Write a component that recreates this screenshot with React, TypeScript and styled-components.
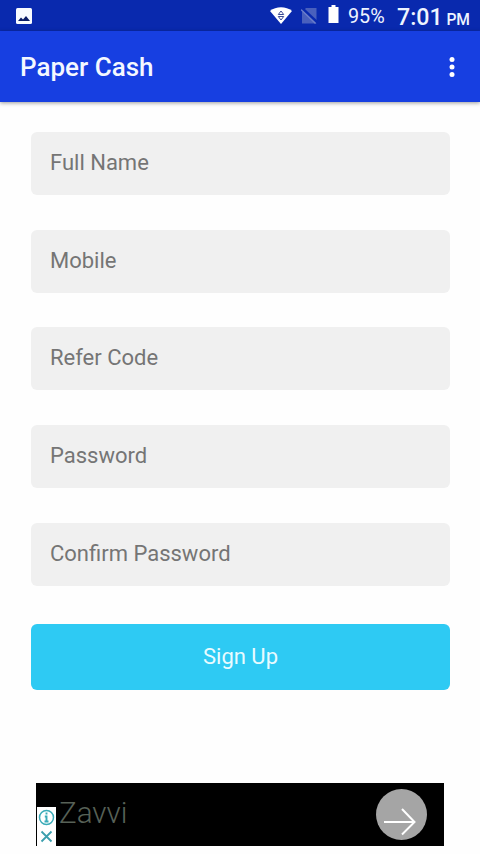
import React from "react";
import styled, { createGlobalStyle } from "styled-components";

const GlobalStyle = createGlobalStyle`
  * { box-sizing: border-box; }
  body { margin: 0; background: #fefefe; font-family: Roboto, sans-serif; }
`;

const Screen = styled.div`
  width: 480px;
  height: 854px;
  display: flex;
  flex-direction: column;
  overflow: hidden;
`;

const StatusBar = styled.header`
  height: 31px;
  flex: none;
  display: flex;
  align-items: flex-start;
  justify-content: space-between;
  padding: 0 10px 0 16px;
  background: #0929ae;
  color: #eef4ff;
`;

const PictureIcon = styled.svg`
  width: 16px;
  height: 16px;
  margin-top: 8px;
`;

const StatusGroup = styled.div`
  display: flex;
  align-items: flex-start;
`;

const StatusIcon = styled.svg<{ $w: number; $h: number; $top: number; $gap: number }>`
  flex: none;
  width: ${(p) => p.$w}px;
  height: ${(p) => p.$h}px;
  margin-top: ${(p) => p.$top}px;
  margin-right: ${(p) => p.$gap}px;
`;

const Battery = styled.span`
  width: 49px;
  margin-top: 5px;
  font-size: 19.8px;
  line-height: 23px;
`;

const Clock = styled.span`
  width: 73px;
  display: flex;
  justify-content: space-between;
  align-items: baseline;
  margin-top: 3px;
  font-size: 23.2px;
  line-height: 28px;
  font-weight: 500;
  white-space: nowrap;
`;

const Meridiem = styled.small`
  font-size: 15.6px;
`;

const AppBar = styled.div`
  height: 71px;
  flex: none;
  display: flex;
  align-items: center;
  justify-content: space-between;
  padding: 0 25px 0 20px;
  background: #173fe1;
  box-shadow: 0 1px 4px rgba(0, 0, 0, 0.4);
`;

const Title = styled.h1`
  margin: 0;
  font-size: 26px;
  line-height: 30px;
  font-weight: 500;
  color: #f4f8ff;
`;

const MenuButton = styled.button`
  display: flex;
  padding: 0;
  border: 0;
  background: none;
`;

const Form = styled.form`
  flex: 1;
  display: flex;
  flex-direction: column;
  gap: 34.7px;
  padding: 30px 30px 0 31px;
`;

const Field = styled.input`
  width: 100%;
  height: 63px;
  flex: none;
  padding: 0 19px 2px;
  border: 0;
  border-radius: 6px;
  outline: 0;
  background: #f0f0f0;
  color: #333;
  font: 22px Roboto, sans-serif;
  &::placeholder { color: #757575; opacity: 1; }
`;

const SubmitButton = styled.button`
  height: 66px;
  flex: none;
  margin-top: 3.5px;
  padding: 0 0 1px;
  border: 0;
  border-radius: 6px;
  background: #2ecaf3;
  color: #e8fbff;
  font: 22px Roboto, sans-serif;
`;

const AdBanner = styled.aside`
  height: 63px;
  flex: none;
  display: flex;
  align-items: flex-start;
  margin: 0 36px 8px;
  padding-right: 17px;
  background: #000;
`;

const AdChoices = styled.div`
  width: 19px;
  height: 39px;
  display: flex;
  flex-direction: column;
  align-items: center;
  gap: 4px;
  margin: 24px 3px 0 1px;
  padding-top: 2px;
  background: #fff;
`;

const AdName = styled.span`
  flex: 1;
  margin-top: 12px;
  font-size: 29.6px;
  line-height: 36px;
  font-weight: 300;
  color: #576157;
`;

const AdAction = styled.svg`
  width: 51px;
  height: 51px;
  margin-top: 6px;
`;

const fields = [
  { label: "Full Name", type: "text" },
  { label: "Mobile", type: "tel" },
  { label: "Refer Code", type: "text" },
  { label: "Password", type: "password" },
  { label: "Confirm Password", type: "password" },
];

export default function App() {
  return (
    <>
      <GlobalStyle />
      <Screen>
        <StatusBar>
          <PictureIcon viewBox="0 0 16 16">
            <rect width="16" height="16" rx="1.5" fill="#f8fbff" />
            <path d="M2 13 5 9.5 7 11.5 10 8 14 13Z" fill="#0a1c66" />
          </PictureIcon>
          <StatusGroup>
            <StatusIcon viewBox="0 0 22 17" $w={22} $h={17} $top={7} $gap={9}>
              <path d="M0 4C6-1 16-1 22 4L11 17Z" fill="#fff" />
              <path d="M8.300 7.500 11 4 13.700 7.500ZM8.300 9.500 11 13 13.700 9.500Z" fill="none" stroke="#3a4a94" strokeWidth="1" />
            </StatusIcon>
            <StatusIcon viewBox="0 0 17 17" $w={17} $h={17} $top={7} $gap={10}>
              <path d="M5 1H15.500V16.500H1V5Z" fill="#4960bd" />
              <path d="M1 1 17 16" stroke="#0929ae" strokeWidth="2.400" />
              <path d="M0 2.500 14.500 16.500" stroke="#6b7ecb" strokeWidth="1.3" />
            </StatusIcon>
            <StatusIcon viewBox="0 0 11 18" $w={11} $h={18} $top={5} $gap={9}>
              <path d="M3.500 0H7.500V2H10.500V18H0.500V2H3.500Z" fill="#fff" />
            </StatusIcon>
            <Battery>95%</Battery>
            <Clock>
              7:01 <Meridiem>PM</Meridiem>
            </Clock>
          </StatusGroup>
        </StatusBar>
        <AppBar>
          <Title>Paper Cash</Title>
          <MenuButton aria-label="More options">
            <svg width="6" height="22" viewBox="0 0 6 22" fill="#fff">
              <circle cx="3" cy="3.500" r="2.500" />
              <circle cx="3" cy="11" r="2.500" />
              <circle cx="3" cy="18.500" r="2.500" />
            </svg>
          </MenuButton>
        </AppBar>
        <Form onSubmit={(e) => e.preventDefault()}>
          {fields.map((f) => (
            <Field key={f.label} type={f.type} placeholder={f.label} />
          ))}
          <SubmitButton type="submit">Sign Up</SubmitButton>
        </Form>
        <AdBanner>
          <AdChoices>
            <svg width="17" height="17" viewBox="0 0 17 17" fill="none" stroke="#3aabb8">
              <circle cx="8.500" cy="8.500" r="7" strokeWidth="1.500" />
              <path d="M8.500 3.500V5.500M6.800 7.500H8.500V12.500M6.500 12.500H10.500" strokeWidth="1.900" />
            </svg>
            <svg width="13" height="13" viewBox="0 0 13 13" fill="none" stroke="#3c9fae">
              <path d="M1.500 1.500 11.500 11.500M11.500 1.500 1.500 11.500" strokeWidth="1.800" />
            </svg>
          </AdChoices>
          <AdName>Zavvi</AdName>
          <AdAction viewBox="0 0 51 51">
            <circle cx="25.500" cy="25.500" r="25.500" fill="#a5a5a5" />
            <path d="M8 33H38.500M26 20 38.500 33 26 45.500" fill="none" stroke="#fff" strokeWidth="2" />
          </AdAction>
        </AdBanner>
      </Screen>
    </>
  );
}
